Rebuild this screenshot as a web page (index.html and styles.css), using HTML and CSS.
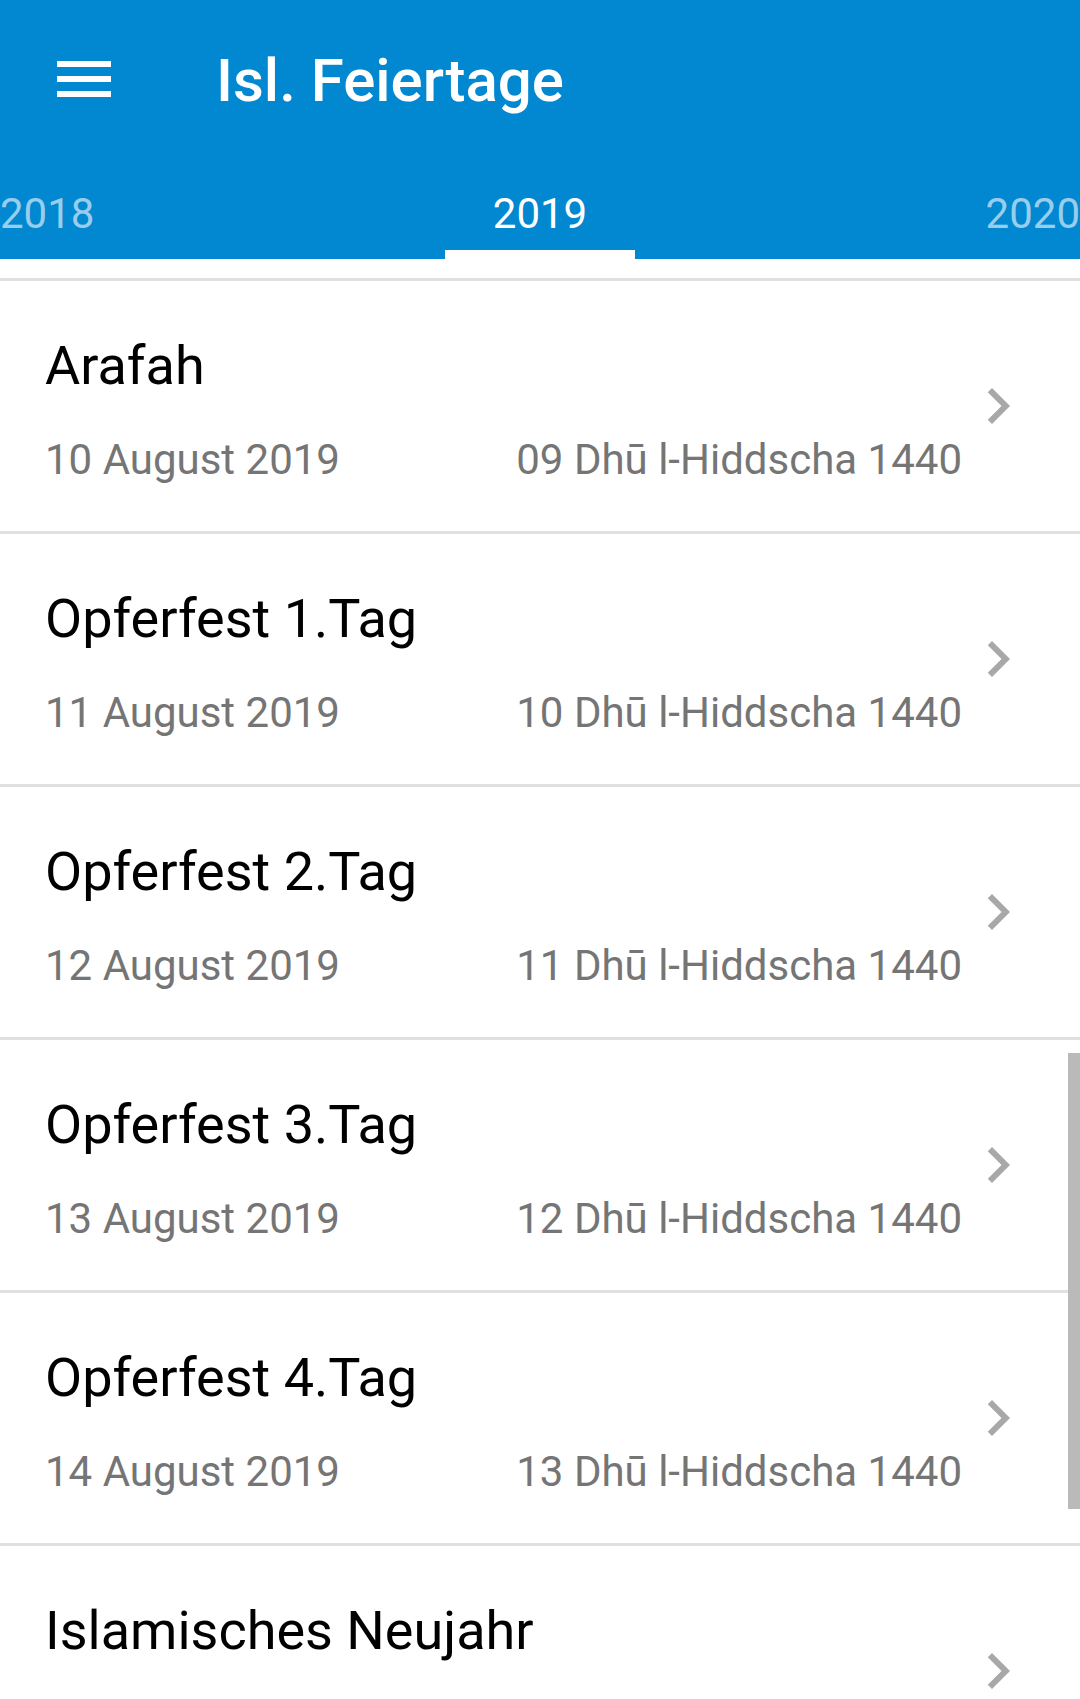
FILE: index.html
```html
<!DOCTYPE html>
<html lang="de">
<head>
<meta charset="utf-8">
<title>Isl. Feiertage</title>
<link rel="stylesheet" href="styles.css">
</head>
<body>
<div class="screen">
  <header class="appbar">
    <div class="toolbar">
      <div class="nav-icon">
        <svg viewBox="0 0 24 24" width="72" height="72"><path fill="#fff" d="M3 18h18v-2H3v2zm0-5h18v-2H3v2zm0-7v2h18V6H3z"/></svg>
      </div>
      <div class="title">Isl. Feiertage</div>
    </div>
    <nav class="tabs">
      <div class="tab">2018</div>
      <div class="tab tab-active"><span class="tab-label">2019</span><span class="indicator"></span></div>
      <div class="tab">2020</div>
    </nav>
  </header>
  <main class="list">
    <div class="stub"></div>
    <div class="item">
      <div class="info">
        <div class="name">Arafah</div>
        <div class="dates"><span>10 August 2019</span><span>09 Dhū l-Hiddscha 1440</span></div>
      </div>
      <div class="chev"><svg viewBox="0 0 24 24" width="72" height="72"><path d="M10 6L8.59 7.41 13.17 12l-4.58 4.59L10 18l6-6z"/></svg></div>
    </div>
    <div class="item">
      <div class="info">
        <div class="name">Opferfest 1.Tag</div>
        <div class="dates"><span>11 August 2019</span><span>10 Dhū l-Hiddscha 1440</span></div>
      </div>
      <div class="chev"><svg viewBox="0 0 24 24" width="72" height="72"><path d="M10 6L8.59 7.41 13.17 12l-4.58 4.59L10 18l6-6z"/></svg></div>
    </div>
    <div class="item">
      <div class="info">
        <div class="name">Opferfest 2.Tag</div>
        <div class="dates"><span>12 August 2019</span><span>11 Dhū l-Hiddscha 1440</span></div>
      </div>
      <div class="chev"><svg viewBox="0 0 24 24" width="72" height="72"><path d="M10 6L8.59 7.41 13.17 12l-4.58 4.59L10 18l6-6z"/></svg></div>
    </div>
    <div class="item">
      <div class="info">
        <div class="name">Opferfest 3.Tag</div>
        <div class="dates"><span>13 August 2019</span><span>12 Dhū l-Hiddscha 1440</span></div>
      </div>
      <div class="chev"><svg viewBox="0 0 24 24" width="72" height="72"><path d="M10 6L8.59 7.41 13.17 12l-4.58 4.59L10 18l6-6z"/></svg></div>
    </div>
    <div class="item">
      <div class="info">
        <div class="name">Opferfest 4.Tag</div>
        <div class="dates"><span>14 August 2019</span><span>13 Dhū l-Hiddscha 1440</span></div>
      </div>
      <div class="chev"><svg viewBox="0 0 24 24" width="72" height="72"><path d="M10 6L8.59 7.41 13.17 12l-4.58 4.59L10 18l6-6z"/></svg></div>
    </div>
    <div class="item">
      <div class="info">
        <div class="name">Islamisches Neujahr</div>
      </div>
      <div class="chev"><svg viewBox="0 0 24 24" width="72" height="72"><path d="M10 6L8.59 7.41 13.17 12l-4.58 4.59L10 18l6-6z"/></svg></div>
    </div>
  </main>
  <div class="scrollbar"></div>
</div>
</body>
</html>
```

FILE: styles.css
```css
* { box-sizing: border-box; }
html, body { margin: 0; padding: 0; }
body {
  width: 1080px;
  height: 1699px;
  overflow: hidden;
  background: #fff;
  font-family: Roboto, "Liberation Sans", sans-serif;
}
.screen {
  position: relative;
  width: 1080px;
  height: 1699px;
  overflow: hidden;
}
.appbar {
  background: #0288d1;
  color: #fff;
}
.toolbar {
  height: 158px;
  display: flex;
  align-items: flex-start;
}
.nav-icon {
  width: 72px;
  height: 72px;
  margin: 43px 0 0 48px;
}
.nav-icon svg { display: block; }
.title {
  margin: 46px 0 0 96px;
  font-size: 60px;
  line-height: 70px;
  font-weight: 500;
}
.tabs {
  height: 101px;
  display: flex;
  justify-content: space-between;
}
.tab {
  display: flex;
  flex-direction: column;
  align-items: center;
  padding-top: 31px;
  font-size: 42px;
  line-height: 50px;
  font-weight: 400;
  color: rgba(255,255,255,0.6);
}
.tab-active {
  color: #fff;
  padding-left: 48px;
  padding-right: 48px;
}
.indicator {
  display: block;
  margin: auto -48px 0;
  align-self: stretch;
  height: 9px;
  background: #fff;
}
.list { display: block; }
.stub {
  height: 22px;
  border-bottom: 3px solid #e0e0e0;
}
.item {
  height: 253px;
  display: flex;
  align-items: center;
  padding: 0 46px 0 45px;
  border-bottom: 3px solid #e0e0e0;
}
.info {
  flex: 1;
  padding-top: 53px;
  padding-bottom: 43px;
  align-self: stretch;
}
.name {
  font-size: 54px;
  line-height: 64px;
  color: #000;
}
.dates {
  margin-top: 34px;
  display: flex;
  justify-content: space-between;
  font-size: 42px;
  line-height: 56px;
  color: #757575;
}
.chev {
  width: 72px;
  height: 72px;
}
.chev svg { display: block; fill: #a8a8a8; }
.scrollbar {
  position: absolute;
  left: 1068px;
  top: 1053px;
  width: 12px;
  height: 456px;
  background: #bababa;
}
```
